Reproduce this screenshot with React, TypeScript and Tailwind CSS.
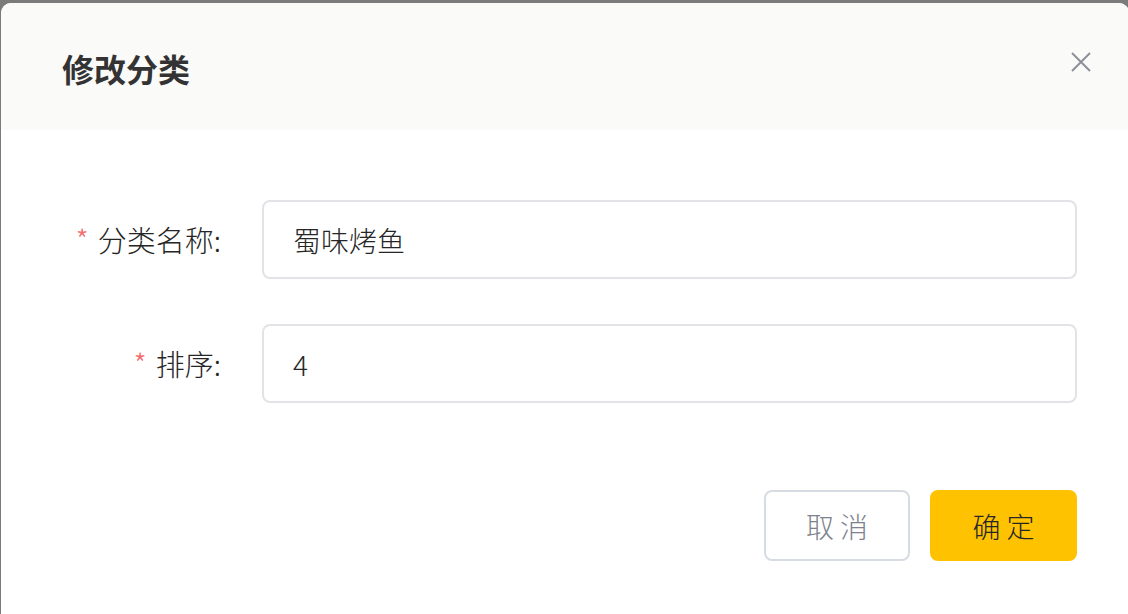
import React, { useState } from 'react';

const font = { fontFamily: '"Noto Sans CJK SC", "Noto Sans", sans-serif' };

const FormRow: React.FC<{ label: string; value: string; onChange: (v: string) => void }> = ({ label, value, onChange }) => (
  <div className="flex items-center">
    <label className="w-[261px] shrink-0 pr-[41px] text-right text-[29px] font-light text-[#262626]">
      <span className="mr-[9px] text-[30px] text-[#f56c6c]">*</span>
      {label}:
    </label>
    <input
      value={value}
      onChange={(e) => onChange(e.target.value)}
      className="h-[79px] flex-1 rounded-[8px] border-2 border-[#e2e3e6] bg-white px-[29px] text-[28px] font-light text-[#262626] outline-none"
      style={font}
    />
  </div>
);

export default function App() {
  const [name, setName] = useState('蜀味烤鱼');
  const [sort, setSort] = useState('4');

  return (
    <div className="h-[614px] w-full overflow-hidden bg-[#7b7b7b] pl-[1px] pt-[3px]" style={font}>
      <div className="h-[640px] w-[1128px] overflow-hidden rounded-t-[10px] bg-white">
        <div className="flex h-[127px] items-center justify-between bg-[#fafaf9] pl-[61px] pr-[37px]">
          <h2 className="mt-[2px] text-[32px] font-bold text-[#333]">修改分类</h2>
          <button className="mb-[9px] text-[#8c9099]" aria-label="close">
            <svg width="22" height="22" viewBox="0 0 22 22" fill="none" stroke="currentColor" strokeWidth="2">
              <path d="M2 2 L20 20 M20 2 L2 20" />
            </svg>
          </button>
        </div>

        <div className="pr-[52px] pt-[70px]">
          <div className="flex flex-col gap-[45px]">
            <FormRow label="分类名称" value={name} onChange={setName} />
            <FormRow label="排序" value={sort} onChange={setSort} />
          </div>

          <div className="mt-[87px] flex justify-end gap-[20px]">
            <button className="h-[71px] w-[146px] rounded-[8px] border-2 border-[#d7dbe2] bg-white text-[28px] font-light text-[#7d828c]">
              取 消
            </button>
            <button className="h-[71px] w-[147px] rounded-[8px] bg-[#ffc200] text-[28px] font-light text-[#262626]">
              确 定
            </button>
          </div>
        </div>
      </div>
    </div>
  );
}
